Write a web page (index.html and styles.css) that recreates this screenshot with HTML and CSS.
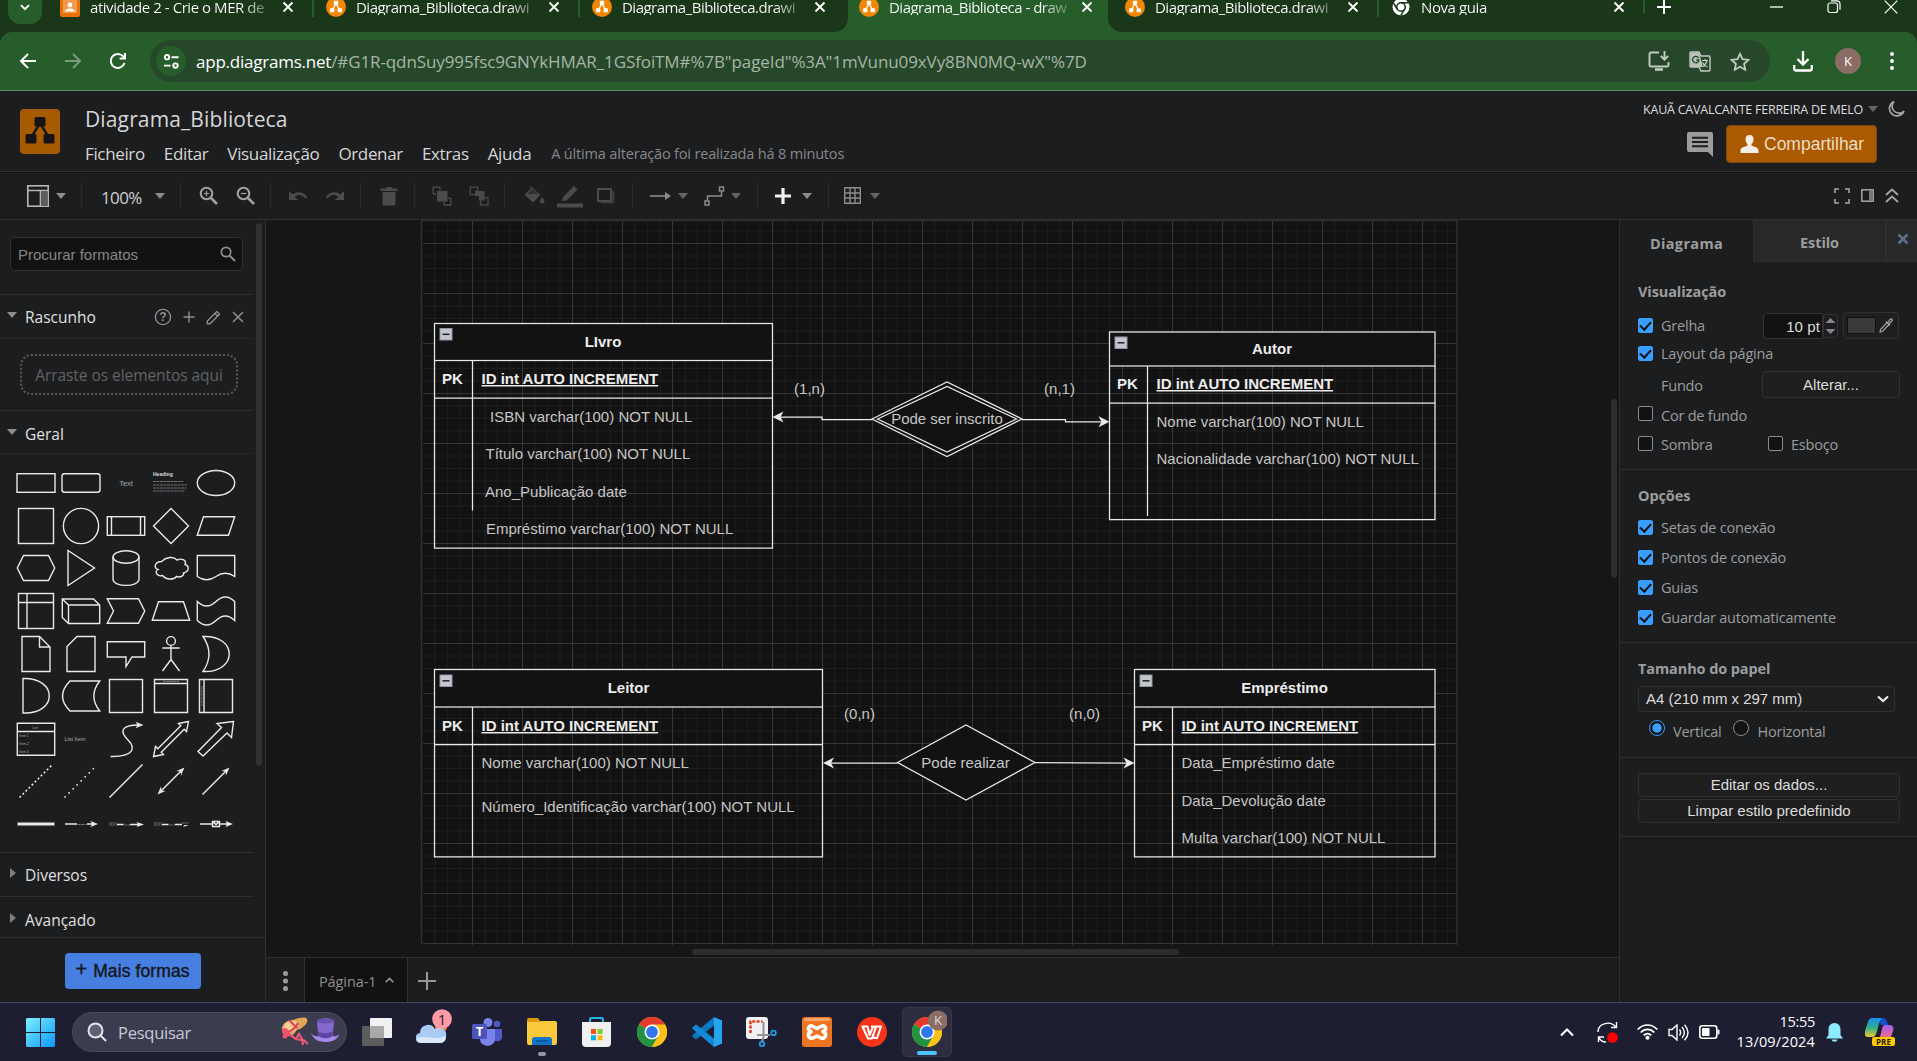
FILE: index.html
```html
<!DOCTYPE html>
<html lang="pt">
<head>
<meta charset="utf-8">
<title>Diagrama_Biblioteca - draw.io</title>
<link rel="stylesheet" href="styles.css">
</head>
<body>
<svg width="0" height="0" class="defs">
  <defs>
    <symbol id="fav" viewBox="0 0 20 20"><circle cx="10" cy="10" r="10" fill="#f08705"/><path d="M10 6.5 6.3 13M10 6.5l3.7 6.5" stroke="#fff" stroke-width="1.4"/><rect x="7.8" y="3.8" width="4.4" height="4" rx=".8" fill="#fff"/><rect x="4" y="11.2" width="4.4" height="4" rx=".8" fill="#fff"/><rect x="11.6" y="11.2" width="4.4" height="4" rx=".8" fill="#fff"/></symbol>
    <symbol id="x" viewBox="0 0 12 12"><path d="M1.5 1.5l9 9m0-9l-9 9" stroke="currentColor" stroke-width="1.8" fill="none"/></symbol>
    <symbol id="caret" viewBox="0 0 10 6"><path d="M0 0h10L5 6z" fill="currentColor"/></symbol>
    <symbol id="chrome" viewBox="0 0 30 30"><circle cx="15" cy="15" r="15" fill="#fbc116"/><path d="M15 15 2 7.5A15 15 0 0 1 28 7.5z" fill="#e33b2e"/><path d="M2 7.5A15 15 0 0 0 15 30l6.5-11.3L15 15z" fill="#229342"/><path d="M28 7.5H15v7.5l6.5 3.7L15 30A15 15 0 0 0 28 7.5z" fill="#fbc116"/><circle cx="15" cy="15" r="7.5" fill="#fff"/><circle cx="15" cy="15" r="5.9" fill="#3076ec"/></symbol>
  </defs>
</svg>

<div class="strip">
  <div class="strip-left">
    <div class="tab-search"><svg width="10" height="7" viewBox="0 0 10 7"><path d="M1 1.2l4 4 4-4" fill="none" stroke="#fff" stroke-width="1.9"/></svg></div>
    <div class="tab"><svg class="ficon" viewBox="0 0 20 20"><rect width="20" height="20" rx="2" fill="#e8710a"/><rect x="3" y="2" width="14" height="14" fill="#f29a4d"/><circle cx="10" cy="8" r="2.4" fill="#fff"/><path d="M5 14.5c0-4 10-4 10 0z" fill="#fff"/></svg><span class="tt t-a">atividade 2 - Crie o MER de</span><svg class="tx"><use href="#x"/></svg></div>
    <div class="tab sep"><svg class="ficon"><use href="#fav"/></svg><span class="tt">Diagrama_Biblioteca.drawi</span><svg class="tx"><use href="#x"/></svg></div>
    <div class="tab sep"><svg class="ficon"><use href="#fav"/></svg><span class="tt">Diagrama_Biblioteca.drawi</span><svg class="tx"><use href="#x"/></svg></div>
  </div>
  <div class="strip-active">
    <div class="tab"><svg class="ficon"><use href="#fav"/></svg><span class="tt">Diagrama_Biblioteca - draw</span><svg class="tx"><use href="#x"/></svg></div>
  </div>
  <div class="strip-right">
    <div class="tab"><svg class="ficon"><use href="#fav"/></svg><span class="tt">Diagrama_Biblioteca.drawi</span><svg class="tx"><use href="#x"/></svg></div>
    <div class="tab sep"><svg class="ficon" viewBox="0 0 20 20"><circle cx="10" cy="10" r="8.5" fill="#fff"/><circle cx="10" cy="10" r="4.3" fill="#fff" stroke="#1a371a" stroke-width="1.6"/><path d="M10 5.7h8M6.2 12 2.3 5.6M13.6 12.2 9.8 18.6" stroke="#1a371a" stroke-width="1.5"/></svg><span class="tt plain">Nova guia</span><svg class="tx"><use href="#x"/></svg></div>
    <div class="tab-new"><svg width="14" height="14" viewBox="0 0 14 14"><path d="M7 0v14M0 7h14" stroke="#fff" stroke-width="2"/></svg></div>
    <div class="win">
      <svg width="14" height="14" viewBox="0 0 14 14"><path d="M0 7h13" stroke="#fff" stroke-width="1.3"/></svg>
      <svg width="14" height="14" viewBox="0 0 14 14" fill="none" stroke="#fff" stroke-width="1.2"><rect x="1" y="3" width="9.5" height="9.5" rx="2"/><path d="M4 .8h6a3 3 0 0 1 3 3v6"/></svg>
      <svg width="14" height="14" viewBox="0 0 14 14"><path d="M.7.7l12.6 12.6m0-12.6L.7 13.3" stroke="#fff" stroke-width="1.2"/></svg>
    </div>
  </div>
</div>

<div class="navwrap"><div class="nav">
  <div class="nav-btns">
    <svg width="18" height="18" viewBox="0 0 18 18" fill="none" stroke="#fff" stroke-width="2"><path d="M17 9H2.5M9 2 2 9l7 7"/></svg>
    <svg width="18" height="18" viewBox="0 0 18 18" fill="none" stroke="#7c9b7e" stroke-width="2"><path d="M1 9h14.5M9 2l7 7-7 7"/></svg>
    <svg width="18" height="18" viewBox="0 0 18 18" fill="none" stroke="#fff" stroke-width="2"><path d="M15.5 11A7 7 0 1 1 14 4.2l1.6 1.7M16 1v5.4h-5.4"/></svg>
  </div>
  <div class="omni">
    <div class="site"><svg width="17" height="15" viewBox="0 0 17 15" fill="none" stroke="#fff" stroke-width="1.9"><circle cx="4" cy="3.2" r="2.2"/><path d="M8.5 3.2h7M1 11.6h6.5"/><circle cx="12.5" cy="11.6" r="2.2"/></svg></div>
    <div class="url"><b>app.diagrams.net</b><span>/#G1R-qdnSuy995fsc9GNYkHMAR_1GSfoiTM#%7B"pageId"%3A"1mVunu09xVy8BN0MQ-wX"%7D</span></div>
    <div class="omni-icons">
      <svg width="22" height="20" viewBox="0 0 22 20" fill="none" stroke="#c3ccc3" stroke-width="1.9"><path d="M11 1.5H3a1.5 1.5 0 0 0-1.5 1.5v11A1.5 1.5 0 0 0 3 15.500h16a1.500 1.500 0 0 0 1.500-1.500v-3"/><path d="M7 18.500h8" stroke-width="2.500"/><path d="M16.500 0v8M12.800 5l3.700 3.700L20.200 5"/></svg>
      <svg width="22" height="21" viewBox="0 0 22 21"><path d="M2 1h8l2 4h8a1 1 0 0 1 1 1v13a1 1 0 0 1-1 1h-8l-2-4H2a1 1 0 0 1-1-1V2a1 1 0 0 1 1-1z" fill="none" stroke="#c3ccc3" stroke-width="1.400"/><path d="M1.500 1.500h8.500L14 16H1.500z" fill="#b9c3b9"/><path d="M9.600 7A3.200 3.200 0 1 0 10 9H7.200" fill="none" stroke="#27472b" stroke-width="1.300"/><path d="M13 9.500h6M16 8v1.500M18 9.500c-1 4-3 5-4 6M13.500 11.500c1.500 3 3.500 4 5 4.500" fill="none" stroke="#c3ccc3" stroke-width="1.200"/></svg>
      <svg width="20" height="19" viewBox="0 0 20 19"><path d="M10 1.800l2.500 5.400 5.900.7-4.300 4 1.100 5.800L10 14.800l-5.200 2.900 1.100-5.800-4.300-4 5.900-.7z" fill="none" stroke="#c3ccc3" stroke-width="1.800"/></svg>
    </div>
  </div>
  <div class="nav-right">
    <svg width="20" height="21" viewBox="0 0 20 21" fill="none" stroke="#fff" stroke-width="2.300"><path d="M10 0v13M4.500 8l5.500 5.500L15.500 8M1.200 14v3.500a2 2 0 0 0 2 2h13.600a2 2 0 0 0 2-2V14"/></svg>
    <span class="avatar">K</span>
    <svg width="4" height="18" viewBox="0 0 4 18" fill="#fff"><circle cx="2" cy="2" r="1.900"/><circle cx="2" cy="9" r="1.900"/><circle cx="2" cy="16" r="1.900"/></svg>
  </div>
</div></div>

<header class="head">
  <svg class="logo" width="40" height="45" viewBox="0 0 40 45"><rect width="40" height="45" rx="4" fill="#a85a00"/><path d="M20 14 11 29M20 14l9 15" stroke="#1b1b1b" stroke-width="2.600"/><g fill="#141414"><rect x="14.500" y="8" width="11" height="9.500" rx="1.500"/><rect x="5.500" y="25" width="11" height="9.500" rx="1.500"/><rect x="23.500" y="25" width="11" height="9.500" rx="1.500"/></g></svg>
  <div class="head-mid">
    <div class="title">Diagrama_Biblioteca</div>
    <nav class="menu"><span>Ficheiro</span><span>Editar</span><span>Visualização</span><span>Ordenar</span><span>Extras</span><span>Ajuda</span><em>A última alteração foi realizada há 8 minutos</em></nav>
  </div>
  <div class="head-right">
    <div class="user"><span>KAUÃ CAVALCANTE FERREIRA DE MELO</span><svg class="caret dk"><use href="#caret"/></svg><svg width="17" height="18" viewBox="0 0 17 18"><path d="M6 1.500A7.500 7.500 0 1 0 16 11 6.500 6.500 0 0 1 6 1.500z" fill="none" stroke="#a5a6a7" stroke-width="1.700"/></svg></div>
    <div class="actions">
      <svg width="26" height="25" viewBox="0 0 26 25"><path d="M2 0h22a2 2 0 0 1 2 2v23l-5-5H2a2 2 0 0 1-2-2V2a2 2 0 0 1 2-2z" fill="#9b9c9d"/><path d="M5 5.800h16M5 10h16M5 14.200h16" stroke="#1c1d1f" stroke-width="2"/></svg>
      <div class="share"><svg width="19" height="19" viewBox="0 0 19 19"><path d="M9.500 0c3 0 4 2 4 4.500 0 2-1 3.700-2 4.700v1.600c3 1 7 1.700 7 4.700V18H.500v-2.500c0-3 4-3.700 7-4.700V9.200c-1-1-2-2.700-2-4.700 0-2.500 1-4.500 4-4.500z" fill="#f3eee8"/></svg><span>Compartilhar</span></div>
    </div>
  </div>
</header>

<div class="bar">
  <div class="g g1"><svg width="22" height="22" viewBox="0 0 22 22" fill="none" stroke="#b5b6b7" stroke-width="1.600"><rect x=".800" y=".800" width="20.400" height="20.400"/><path d="M1 5.500h20M13.500 5.500V21"/><rect x="14.500" y="6" width="6" height="15" fill="#5c5d5e" stroke="none"/></svg><svg class="caret"><use href="#caret"/></svg></div>
  <div class="g g2"><span>100%</span><svg class="caret"><use href="#caret"/></svg></div>
  <div class="g"><svg width="24" height="24" viewBox="0 0 24 24" fill="none" stroke="#a0a1a2"><circle cx="10.500" cy="9.500" r="5.800" stroke-width="2.100"/><path d="M15 14l6 6" stroke-width="2.600"/><path d="M10.500 6.800v5.400M7.800 9.500h5.400" stroke-width="1.200"/></svg><svg width="24" height="24" viewBox="0 0 24 24" fill="none" stroke="#a0a1a2"><circle cx="10.500" cy="9.500" r="5.800" stroke-width="2.100"/><path d="M15 14l6 6" stroke-width="2.600"/><path d="M7.800 9.500h5.400" stroke-width="1.200"/></svg></div>
  <div class="g dim"><svg width="24" height="24" viewBox="0 0 24 24"><path d="M3 7v9h9l-3.300-3.300c3.500-3 8-2 10.800 1.800l2-1C18 8 11.500 6.500 6.600 10.600z"/></svg><svg width="24" height="24" viewBox="0 0 24 24"><path d="M21 7v9h-9l3.300-3.300c-3.500-3-8-2-10.800 1.800l-2-1C6 8 12.500 6.500 17.400 10.600z"/></svg></div>
  <div class="g dim"><svg width="24" height="24" viewBox="0 0 24 24"><path d="M3.500 4.500h5l1-1.500h5l1 1.500h5V7h-17zM5.500 8h13v11.500a2 2 0 0 1-2 2h-9a2 2 0 0 1-2-2z"/></svg></div>
  <div class="g dim"><svg width="24" height="24" viewBox="0 0 24 24"><rect x="7" y="7" width="10.500" height="10.500"/><path d="M10 3.200H3.200V10M10 3.200V6M3.200 10H6M14 21h6.800v-6.800M14 21v-3M20.800 14.200H18" fill="none" stroke="#4a4b4c" stroke-width="1.300"/></svg><svg width="24" height="24" viewBox="0 0 24 24"><path d="M8 7h9.500v9.500H12V12H8z"/><g fill="none" stroke="#4a4b4c" stroke-width="1.300"><rect x="3.200" y="3.200" width="7.500" height="7.500"/><rect x="13.500" y="13.500" width="7.500" height="7.500"/></g></svg></div>
  <div class="g dim"><svg width="24" height="24" viewBox="0 0 24 24"><path d="M8 1.500 18.500 11 11 18.500 2.500 10.500 9 4.500zM20 13c1.500 2 2.500 3.300 2.500 4.300a2.300 2.300 0 0 1-4.600 0C17.900 16.300 18.900 15 20 13z"/><path d="M5 10l5.500-5 5.500 5z" fill="#1c1d1f" opacity=".6"/></svg><svg width="28" height="26" viewBox="0 0 28 26" class="pen"><path d="M7 14 18 3l3.500 3.500L10.500 17.500 6 18z"/><rect x="1" y="20.500" width="26" height="4"/></svg><svg width="24" height="24" viewBox="0 0 24 24"><path d="M7 19.500h13.500V7H18v10H7z" opacity=".6"/><rect x="4" y="5" width="13" height="12" fill="none" stroke="#4a4b4c" stroke-width="2"/></svg></div>
  <div class="g g8"><svg width="22" height="10" viewBox="0 0 22 10"><path d="M0 5h17" stroke="#8b8c8d" stroke-width="1.600"/><path d="M15 1l6 4-6 4z" fill="#8b8c8d"/></svg><svg class="caret dk"><use href="#caret"/></svg><svg class="way" width="21" height="20" viewBox="0 0 21 20" fill="none" stroke="#8b8c8d" stroke-width="1.500"><path d="M3.500 14.500V10h14V5.500"/><rect x="1" y="15" width="4" height="4"/><rect x="15.500" y="1" width="4" height="4"/></svg><svg class="caret dk"><use href="#caret"/></svg></div>
  <div class="g g9"><svg width="18" height="18" viewBox="0 0 18 18"><path d="M9 1v16M1 9h16" stroke="#f0f0f0" stroke-width="3.200"/></svg><svg class="caret"><use href="#caret"/></svg></div>
  <div class="g g10"><svg width="17" height="17" viewBox="0 0 17 17"><path d="M.700.700h15.600v15.600H.700zM6 0v17M11 0v17M0 6h17M0 11h17" fill="none" stroke="#8b8c8d" stroke-width="1.400"/></svg><svg class="caret dk"><use href="#caret"/></svg></div>
  <div class="bar-end">
    <svg width="16" height="16" viewBox="0 0 16 16" fill="none" stroke="#a4a5a6" stroke-width="1.600"><path d="M1 5V1h4M11 1h4v4M15 11v4h-4M5 15H1v-4"/></svg>
    <svg width="13" height="13" viewBox="0 0 13 13"><rect x=".800" y=".800" width="11.400" height="11.400" fill="none" stroke="#a4a5a6" stroke-width="1.500"/><rect x="8" y="1" width="4" height="11" fill="#77787a"/></svg>
    <svg width="14" height="15" viewBox="0 0 14 15" fill="none" stroke="#a4a5a6" stroke-width="1.800"><path d="M1 7l6-5.500L13 7M1 14l6-5.500L13 14"/></svg>
  </div>
</div>

<main class="main">
  <aside class="side">
    <div class="side-scroll">
      <div class="search-row"><div class="search"><span>Procurar formatos</span><svg width="16" height="16" viewBox="0 0 16 16" fill="none" stroke="#8d8e8f"><circle cx="6" cy="6" r="4.700" stroke-width="1.700"/><path d="M9.500 9.500l5.500 5.500" stroke-width="2"/></svg></div></div>
      <div class="sec h44"><svg class="caret"><use href="#caret"/></svg><span>Rascunho</span>
        <div class="sec-ic">
          <svg width="18" height="18" viewBox="0 0 18 18"><circle cx="9" cy="9" r="7.600" fill="none" stroke="#8d8e8f" stroke-width="1.400"/><text x="9" y="13.200" text-anchor="middle" class="q">?</text></svg>
          <svg width="12" height="12" viewBox="0 0 12 12"><path d="M6 .500v11M.500 6h11" stroke="#8d8e8f" stroke-width="1.400"/></svg>
          <svg width="15" height="15" viewBox="0 0 15 15" fill="none" stroke="#8d8e8f" stroke-width="1.400"><path d="M1.300 13.700V11l9.500-9.500 2.700 2.700L4 13.700zM9 3.500 11.500 6"/></svg>
          <svg width="12" height="12" viewBox="0 0 12 12"><path d="M1 1l10 10m0-10L1 11" stroke="#8d8e8f" stroke-width="1.500"/></svg>
        </div></div>
      <div class="drop-row"><div class="drop">Arraste os elementos aqui</div></div>
      <div class="sec h43"><svg class="caret"><use href="#caret"/></svg><span>Geral</span></div>
      <div class="palette">
        <svg viewBox="-22 -21 44 42"><rect x="-19" y="-9.300" width="38" height="18.600"/></svg>
        <svg viewBox="-22 -21 44 42"><rect x="-19" y="-9.300" width="38" height="18.600" rx="2.500"/></svg>
        <svg viewBox="-22 -21 44 42"><text x="0" y="3" text-anchor="middle" class="p-t">Text</text></svg>
        <svg viewBox="-22 -21 44 42"><text x="-18" y="-7" class="p-h">Heading</text><path class="dimline" d="M-18-1.500H12M-18 2H16M-18 5H15.500M-18 8H14"/></svg>
        <svg viewBox="-22 -21 44 42"><ellipse rx="18.700" ry="12.500"/></svg>
        <svg viewBox="-22 -21 44 42"><rect x="-17.500" y="-17.500" width="35" height="35"/></svg>
        <svg viewBox="-22 -21 44 42"><circle r="17.600"/></svg>
        <svg viewBox="-22 -21 44 42"><rect x="-18.700" y="-9.300" width="37.400" height="18.600"/><path d="M-14.500-9.300V9.300M14.500-9.300V9.300"/></svg>
        <svg viewBox="-22 -21 44 42"><path d="M0-17.500 17.500 0 0 17.500-17.500 0z"/></svg>
        <svg viewBox="-22 -21 44 42"><path d="M-18.700 9.300-12.500-9.300H18.700L12.500 9.300z"/></svg>
        <svg viewBox="-22 -21 44 42"><path d="M-18.700 0-12.500-12.500H12.500L18.700 0 12.500 12.500H-12.500z"/></svg>
        <svg viewBox="-22 -21 44 42"><path d="M-13-17.500V17.500L13.500 0z"/></svg>
        <svg viewBox="-22 -21 44 42"><path d="M-13-11V11C-13 19.500 13 19.500 13 11V-11"/><ellipse cy="-11" rx="13" ry="6.300"/></svg>
        <svg viewBox="-22 -21 44 42"><path d="M-9.500-6.500C-16-6.500-18 0-13 1.500-17.500 4-13 9-8.500 7.500-5 12 3 12 5.500 8.500 10 10 13.500 7 12.500 5 19 3.500 18-2.500 14-3.500 16-8 11-10 6-8 2.500-12-5-11-9.500-6.500z"/></svg>
        <svg viewBox="-22 -21 44 42"><path d="M-18.700-12.500H18.700V8.500Q9.300 2 0 8.500T-18.700 8.500z"/></svg>
        <svg viewBox="-22 -21 44 42"><rect x="-17.500" y="-17.500" width="35" height="35"/><path d="M-9-17.500V17.500M-17.500-8.500H17.500"/></svg>
        <svg viewBox="-22 -21 44 42"><path d="M-18.700-12H12.500L18.700-6V12.500H-12.500L-18.700 6.500zM-18.700-12-12.500-6H18.700M-12.500-6V12.500"/></svg>
        <svg viewBox="-22 -21 44 42"><path d="M-18.700-12.300H12.500L18.700 0 12.500 12.300H-18.700L-12.500 0z"/></svg>
        <svg viewBox="-22 -21 44 42"><path d="M-18.700 9.300-12.500-9.300H12.500L18.700 9.300z"/></svg>
        <svg viewBox="-22 -21 44 42"><path d="M-18.700-9.500Q-9.300-.500 0-9.500T18.700-9.500V9.500Q9.300 .500 0 9.500T-18.700 9.500z"/></svg>
        <svg viewBox="-22 -21 44 42"><path d="M-14-17.500H3.500L14-7V17.500H-14zM3.500-17.500V-7H14"/></svg>
        <svg viewBox="-22 -21 44 42"><path d="M-4-17.500H14V17.500H-14V-7.500z"/></svg>
        <svg viewBox="-22 -21 44 42"><path d="M-18.700-12.300H18.700V3H6L0 12.500V3H-18.700z"/></svg>
        <svg viewBox="-22 -21 44 42"><circle cy="-13" r="4.400"/><path d="M0-8.500V5.500M-8.700-6H8.700M0 5.500-8.500 17M0 5.500 8.500 17"/></svg>
        <svg viewBox="-22 -21 44 42"><path d="M-13-17.500C22-19 22 19-13 17.500Q-1 0-13-17.500z"/></svg>
        <svg viewBox="-22 -21 44 42"><path d="M-13-17.500C22-18.500 22 18.500-13 17z"/></svg>
        <svg viewBox="-22 -21 44 42"><path d="M-11-15H18.700Q7 0 18.700 15H-11Q-26 0-11-15z"/></svg>
        <svg viewBox="-22 -21 44 42"><rect x="-16.500" y="-16.500" width="33" height="33"/></svg>
        <svg viewBox="-22 -21 44 42"><path d="M-16.500-16.500h33v33h-33zM-16.500-12.500h33"/><path class="dimline" d="M-8-14.500H8"/></svg>
        <svg viewBox="-22 -21 44 42"><path d="M-16.500-16.500h33v33h-33zM-12-16.500v33"/><path class="dimline" d="M-14.200-10V10"/></svg>
        <svg viewBox="-22 -21 44 42"><path d="M-18.700-15.700h37.400v32h-37.400zM-18.700-7.500h37.400"/><text x="-1" y="-10.300" text-anchor="middle" class="p-x">List</text><text x="-17" y="-2.500" class="p-x">Item 1</text><text x="-17" y="5.500" class="p-x">Item 2</text><text x="-17" y="13.500" class="p-x">Item 3</text></svg>
        <svg viewBox="-22 -21 44 42"><text x="-16.500" y="2" class="p-l">List Item</text></svg>
        <svg viewBox="-22 -21 44 42"><path d="M-15.500 17.500C8 18 10 9 2 1S-6-14 13-14"/><path class="fl" d="M17.500-14l-8 3.300 2-3.300-2-3.300z"/></svg>
        <svg viewBox="-22 -21 44 42"><path d="M17.500-17.500 7.500-15.500 9.800-13.200-13.200 9.800-15.500 7.500-17.500 17.500-7.500 15.500-9.800 13.200 13.200-9.800 15.500-7.500z"/></svg>
        <svg viewBox="-22 -21 44 42"><path d="M17.500-17.500 1-15.500 5.500-11.500-18 12.500-13 17 11-6 15.500-1.500z"/></svg>
        <svg viewBox="-22 -21 44 42"><path class="da1" d="M-16.500 16.500 16.500-16.500"/></svg>
        <svg viewBox="-22 -21 44 42"><path class="da2" d="M-16.500 16.500 14.500-14.500"/></svg>
        <svg viewBox="-22 -21 44 42"><path d="M-16.500 16.500 16.500-16.500"/></svg>
        <svg viewBox="-22 -21 44 42"><path d="M-10 10 10-10"/><path class="fl" d="M13.500-13.500 5.500-10l4 .500.500 4zM-13.500 13.500-5.500 10l-4-.500-.500-4z"/></svg>
        <svg viewBox="-22 -21 44 42"><path d="M-13.500 13.500 10-10"/><path class="fl" d="M13.500-13.500 5.500-10l4 .500.500 4z"/></svg>
        <svg viewBox="-22 -21 44 42"><path d="M-18.500 0h37" class="thick"/></svg>
        <svg viewBox="-22 -21 44 42"><path d="M-16 0H-4M6 0h8"/><path class="dimline" d="M-3.500.500h9"/><path class="fl" d="M17 0 9.500 3l1.500-3-1.500-3z"/></svg>
        <svg viewBox="-22 -21 44 42"><path d="M-9 .500h6.500M4 .500h11"/><path class="dimline" d="M-17-1h8M-17 1h8M-2 1h6"/><path class="fl" d="M18 .500l-7.500 2.500L12 .500 10.500-2z"/></svg>
        <svg viewBox="-22 -21 44 42"><path d="M-9 .500h6.500M4 .500h7"/><path class="dimline" d="M-17-1h8M-17 1h8M-2 1h6M11-1h7"/><path class="fl" d="M18 1l-6 2 1.500-2z"/></svg>
        <svg viewBox="-22 -21 44 42"><path d="M-16 0H-4M4 0h9M-3.500-2.500h7v5h-7zM-3.500-2.500 0 .500l3.500-3"/><path class="fl" d="M17 0 9.500 3l1.500-3-1.500-3z"/></svg>
      </div>
      <div class="sec h44"><svg class="rc" viewBox="0 0 6 10"><path d="M0 0v10l6-5z" fill="#7d7e7f"/></svg><span>Diversos</span></div>
      <div class="sec h41"><svg class="rc" viewBox="0 0 6 10"><path d="M0 0v10l6-5z" fill="#7d7e7f"/></svg><span>Avançado</span></div>
      <i class="side-thumb"></i>
    </div>
    <div class="side-foot"><div class="more"><span class="pl">+</span> Mais formas</div></div>
  </aside>

  <section class="center">
    <div class="stage">
      <svg class="diagram" viewBox="266 220 1353 737" width="1353" height="737">
        <defs>
          <pattern id="grid" patternUnits="userSpaceOnUse" x="422" y="243" width="50" height="50">
            <path d="M13 0v50M25.500 0v50M38 0v50M0 13h50M0 25.500h50M0 38h50" stroke="#1d1d1d" stroke-width="1" fill="none"/>
            <path d="M.500 0v50M0 .500h50" stroke="#363636" stroke-width="1" fill="none"/>
          </pattern>
        </defs>
        <rect x="421" y="220" width="1036" height="725" fill="#121212"/>
        <rect x="423" y="221" width="1034" height="724" fill="url(#grid)"/>
        <path d="M421.500 945V220.500H1457V945" fill="none" stroke="#2f3031" stroke-width="1.500"/>
        <g class="tbl">
          <rect x="434.500" y="323.500" width="338" height="37" class="hd"/>
          <path d="M434.500 360.500V548H772.500V360.500M434.500 398H772.500M472.500 361V510.500"/>
          <rect x="1109.500" y="332" width="325.500" height="34" class="hd"/>
          <path d="M1109.500 366V519.500H1435V366M1109.500 403H1435M1147.500 366V516"/>
          <rect x="434.500" y="669.500" width="388" height="37.500" class="hd"/>
          <path d="M434.500 707V856.800H822.500V707M434.500 744.500H822.500M472.500 707V856.800"/>
          <rect x="1134.500" y="669.500" width="300.500" height="37.500" class="hd"/>
          <path d="M1134.500 707V856.800H1435V707M1134.500 744.500H1435M1172.500 707V856.800"/>
          <path d="M872 419 947 382l75 37-75 37.500z" class="bg"/><path d="M877.500 419 947 386.500l69.500 32.500-69.500 33z"/>
          <path d="M897.500 762.500 966 725l69 37.500-69 37.500z" class="bg"/>
          <path d="M780 417H822V419.500H872M1022 419.500H1065.500V421.800H1102M830 763H897.500M1035 762.500 1127 763"/>
          <path class="ar" d="M772.500 417l11-5.500-3 5.500 3 5.500zM1109.500 421.800l-11-5.500 3 5.500-3 5.500zM823 763l11-5.500-3 5.500 3 5.500zM1134.500 763l-11-5.500 3 5.500-3 5.500z"/>
        </g>
        <g class="col"><g transform="translate(440 328.500)"><rect width="12" height="11.500"/><path d="M2.500 5.800h7"/></g><g transform="translate(1115 337)"><rect width="12" height="11.500"/><path d="M2.500 5.800h7"/></g><g transform="translate(440 675)"><rect width="12" height="11.500"/><path d="M2.500 5.800h7"/></g><g transform="translate(1140 675)"><rect width="12" height="11.500"/><path d="M2.500 5.800h7"/></g></g>
        <g class="tx-b mid"><text x="603" y="347">LIvro</text><text x="1272" y="354">Autor</text><text x="628.500" y="693">Leitor</text><text x="1284.500" y="693">Empréstimo</text><text x="452.500" y="384">PK</text><text x="1127.500" y="389">PK</text><text x="452.500" y="731">PK</text><text x="1152.500" y="731">PK</text></g>
        <g class="tx-b un"><text x="481.500" y="384">ID int AUTO INCREMENT</text><text x="1156.500" y="389">ID int AUTO INCREMENT</text><text x="481.500" y="731">ID int AUTO INCREMENT</text><text x="1181.500" y="731">ID int AUTO INCREMENT</text></g>
        <g class="tx-n"><text x="490" y="422">ISBN varchar(100) NOT NULL</text><text x="485.500" y="459">Título varchar(100) NOT NULL</text><text x="485" y="497">Ano_Publicação date</text><text x="486" y="534">Empréstimo varchar(100) NOT NULL</text>
          <text x="1156.500" y="427">Nome varchar(100) NOT NULL</text><text x="1156.500" y="464">Nacionalidade varchar(100) NOT NULL</text>
          <text x="481.500" y="768">Nome varchar(100) NOT NULL</text><text x="481.500" y="812">Número_Identificação varchar(100) NOT NULL</text>
          <text x="1181.500" y="768">Data_Empréstimo date</text><text x="1181.500" y="806">Data_Devolução date</text><text x="1181.500" y="843">Multa varchar(100) NOT NULL</text></g>
        <g class="tx-n mid"><text x="947" y="424">Pode ser inscrito</text><text x="965.500" y="768">Pode realizar</text><text x="809.500" y="394">(1,n)</text><text x="1059.500" y="394">(n,1)</text><text x="859.500" y="719">(0,n)</text><text x="1084.500" y="719">(n,0)</text></g>
      </svg>
      <i class="vthumb"></i><i class="hthumb"></i>
    </div>
    <div class="pages">
      <div class="pdots"><svg width="5" height="20" viewBox="0 0 5 20" fill="#9a9b9c"><circle cx="2.500" cy="2.500" r="2.500"/><circle cx="2.500" cy="10" r="2.500"/><circle cx="2.500" cy="17.500" r="2.500"/></svg></div>
      <div class="ptab"><span>Página-1</span><svg width="9" height="6" viewBox="0 0 9 6"><path d="M.700 5.200l3.800-3.800 3.800 3.800" fill="none" stroke="#9a9b9c" stroke-width="1.500"/></svg></div>
      <svg class="padd" width="18" height="18" viewBox="0 0 18 18"><path d="M9 0v18M0 9h18" stroke="#97989a" stroke-width="2"/></svg>
    </div>
  </section>

  <aside class="fmt">
    <div class="ftabs"><div class="ft on">Diagrama</div><div class="ft">Estilo</div><div class="ft-x"><svg width="12" height="12" viewBox="0 0 12 12"><path d="M1.500 1.500l9 9m0-9l-9 9" stroke="#5c6f86" stroke-width="2.600"/></svg></div></div>
    <div class="fsec s1">
      <div class="r r30"><b>Visualização</b></div>
      <div class="r grelha"><i class="cb on"></i><span>Grelha</span><div class="num">10 pt</div><div class="step"><svg width="11" height="5" viewBox="0 0 10 5"><path d="M0 5h10L5 0z" fill="#85868a"/></svg><svg width="11" height="5" viewBox="0 0 10 5"><path d="M0 0h10L5 5z" fill="#85868a"/></svg></div><div class="color"><i></i><svg width="14" height="15" viewBox="0 0 14 15" fill="none" stroke="#a5a6a7" stroke-width="1.200"><path d="M1 14l.500-2.500 6.500-7 2 2-6.500 7zM7 3.500l4 4M8.500 5l2.500-3.500c1.500-1.500 3 0 1.800 1.500L10 6"/></svg></div></div>
      <div class="r lay"><i class="cb on"></i><span>Layout da página</span></div>
      <div class="r fundo"><span>Fundo</span><div class="btn">Alterar...</div></div>
      <div class="r r30 hi"><i class="cb"></i><span>Cor de fundo</span></div>
      <div class="r r29 hi"><i class="cb"></i><span class="w">Sombra</span><i class="cb"></i><span>Esboço</span></div>
    </div>
    <div class="fsec s2">
      <div class="r r32"><b>Opções</b></div>
      <div class="r r30"><i class="cb on"></i><span>Setas de conexão</span></div>
      <div class="r r30"><i class="cb on"></i><span>Pontos de conexão</span></div>
      <div class="r r30"><i class="cb on"></i><span>Guias</span></div>
      <div class="r r30"><i class="cb on"></i><span>Guardar automaticamente</span></div>
    </div>
    <div class="fsec s3">
      <div class="r r30"><b>Tamanho do papel</b></div>
      <div class="select"><span>A4 (210 mm x 297 mm)</span><svg width="12" height="8" viewBox="0 0 12 8"><path d="M1 1.500l5 4.500 5-4.500" fill="none" stroke="#e8e8e8" stroke-width="2.200"/></svg></div>
      <div class="r radios"><i class="rd on"></i><span>Vertical</span><i class="rd"></i><span>Horizontal</span></div>
    </div>
    <div class="fsec s4"><div class="btn wide">Editar os dados...</div><div class="btn wide">Limpar estilo predefinido</div></div>
  </aside>
</main>

<footer class="task">
  <svg class="start" width="29" height="29" viewBox="0 0 29 29"><defs><linearGradient id="w" x1="0" y1="0" x2="1" y2="1"><stop offset="0" stop-color="#7cf0fb"/><stop offset="1" stop-color="#0a96f8"/></linearGradient></defs><path d="M1 0h13v14H0V1zM15 0h13l1 1v13H15zM0 15h14v14H1l-1-1zM15 15h14v13l-1 1H15z" fill="url(#w)"/></svg>
  <div class="tsearch"><svg width="20" height="20" viewBox="0 0 20 20" fill="none" stroke="#e4e4ea" stroke-width="2"><circle cx="8.500" cy="8.500" r="7" fill="#606072"/><path d="M13.500 13.500l5.500 5.500"/></svg><span>Pesquisar</span>
    <svg width="58" height="30" viewBox="0 0 58 30"><path d="M1 14C0 7 6 3 12 3c5-2 12-4 14-1 2 4-5 10-10 11l-3 4c-4 3-11 2-12-3z" fill="#e3a659"/><path d="M2 12C3 5 9 2 14 4c3 1 3 5 1 8-4 5-11 5-13 0z" fill="#f6cf92"/><path d="M8 3l8 8M4 15c5 0 10-3 13-9" stroke="#df4257" stroke-width="2" fill="none"/><g fill="#f0526c"><circle cx="4" cy="14" r="3"/><circle cx="7" cy="17" r="2.500"/><circle cx="4" cy="19" r="2.500"/></g><path d="M8 17l7 5 3-5 3 5 6 5M15 22l10 2M21 22l1 6" stroke="#ec5870" stroke-width="2.200" fill="none"/><path d="M36 5c0-5 17-5 17 0l-1.500 16h-14z" fill="#8468cf"/><ellipse cx="44.500" cy="4" rx="8.500" ry="2.500" fill="#6b51b1"/><path d="M30 15c1 4 5 5 8 4 4 3 9 3 13 0 3 1 7 0 8-4-1 6-6 10-14.500 10S31 21 30 15z" fill="#a48aec"/><path d="M37 14c4 3 10 3 15 0l-.500 5c-4 3-10 3-14 0z" fill="#5f45a3"/></svg></div>
  <div class="apps">
    <div><svg width="30" height="28" viewBox="0 0 30 28"><rect x="8" y="0" width="22" height="20" rx="1" fill="#f1f1f1"/><rect x="0" y="8" width="22" height="20" rx="1" fill="#5c5c5c"/><path d="M8 8h14v12H8z" fill="#a9a9a9"/></svg></div>
    <div><svg width="36" height="38" viewBox="0 0 36 38" class="up"><circle cx="25" cy="18" r="6" fill="#f07a24"/><path d="M5 34a5 5 0 0 1-1-10 8 8 0 0 1 15-4 7 7 0 0 1 11 7c0 4-2 7-6 7z" fill="#a9cbf5"/><path d="M1 29c6-3 18 3 29-2 0 4-2 7-6 7H5c-2 0-4-2-4-5z" fill="#dbe9fb"/><circle cx="26" cy="10" r="9.800" fill="#ff9ba6"/><text x="26" y="15.500" text-anchor="middle" class="badge">1</text></svg></div>
    <div><svg width="30" height="28" viewBox="0 0 30 28"><circle cx="16" cy="4.500" r="4.500" fill="#7b83eb"/><circle cx="25" cy="6" r="3.200" fill="#5059c9"/><path d="M18 11h12v8c0 5-8 6-9 1z" fill="#5059c9"/><path d="M8 11h15v10c0 9-15 9-15 0z" fill="#7b83eb"/><rect x="0" y="6" width="15" height="15" rx="1.500" fill="#4b53bc"/><text x="7.500" y="18" text-anchor="middle" class="teams">T</text></svg></div>
    <div class="open"><svg width="30" height="28" viewBox="0 0 30 28"><path d="M0 2a2 2 0 0 1 2-2h9l3 4H0z" fill="#d99b0b"/><path d="M0 4h12l3-1h13a2 2 0 0 1 2 2v20a2 2 0 0 1-2 2H2a2 2 0 0 1-2-2z" fill="#fbc93b"/><path d="M5 27v-5a3 3 0 0 1 3-3h14a3 3 0 0 1 3 3v5z" fill="#1075c9"/><path d="M9 23h12" stroke="#0a4f94" stroke-width="1.500"/></svg></div>
    <div><svg width="29" height="30" viewBox="0 0 29 30"><path d="M8 5V2.500A1.500 1.500 0 0 1 9.500 1h10A1.500 1.500 0 0 1 21 2.500V5" fill="none" stroke="#27b5e8" stroke-width="2"/><path d="M0 5h29v21a4 4 0 0 1-4 4H4a4 4 0 0 1-4-4z" fill="#f0f0f0"/><path d="M9 12h5v5H9z" fill="#f1511b"/><path d="M15.500 12h5v5h-5z" fill="#80cc28"/><path d="M9 18.300h5v5H9z" fill="#00adef"/><path d="M15.500 18.300h5v5h-5z" fill="#fbbc09"/></svg></div>
    <div><svg width="30" height="30"><use href="#chrome"/></svg></div>
    <div><svg width="30" height="30" viewBox="0 0 30 30"><path d="M22 8.500 4 22.500 1 20 0 18.500 22 0z" fill="#0b79c4"/><path d="M22 21.500 4 7.500 1 10l-1 1.500L22 30z" fill="#1389d6"/><path d="M22 0l8 3.500v23L22 30z" fill="#25a5f0"/></svg></div>
    <div><svg width="31" height="30" viewBox="0 0 31 30"><rect width="22" height="22" rx="3" fill="#f1f1f3"/><path d="M4.500 16V4.500h12" fill="none" stroke="#d5421c" stroke-width="2.600" stroke-dasharray="3 1.400"/><path d="M17.500 5v15L16 25M11 18h13" fill="none" stroke="#929497" stroke-width="2"/><circle cx="16" cy="27" r="2.300" fill="none" stroke="#1b9de2" stroke-width="1.800"/><circle cx="27.500" cy="16" r="2.300" fill="none" stroke="#1b9de2" stroke-width="1.800"/></svg></div>
    <div><svg width="30" height="30" viewBox="0 0 30 30"><rect width="30" height="30" rx="3" fill="#ee7623"/><rect x="2" y="1" width="26" height="3" rx="1.500" fill="#f6a468"/><path d="M10 9c-4-1-5 4-1 5.500-4 1.500-3 8 2 6.500l4-2 4 2c5 1.500 6-5 2-6.500 4-1.500 3-6.500-1-5.500l-5 2.500z" fill="none" stroke="#fff" stroke-width="3.600" stroke-linejoin="round"/></svg></div>
    <div><svg width="30" height="30" viewBox="0 0 30 30"><circle cx="15" cy="15" r="15" fill="#f8331a"/><path d="M5.500 9.500h5l2 8.500 3.500-8h3L15 21.500h-4zM14 9.500h10L20 21h-3l-1.500-4" fill="none" stroke="#fff" stroke-width="2.100" stroke-linejoin="round"/></svg></div>
    <div class="active"><svg width="36" height="38" viewBox="0 0 36 38" class="ch"><use href="#chrome" x="1" y="7" width="30" height="30"/><circle cx="27" cy="10.500" r="10" fill="#8a6d64"/><text x="27" y="15" text-anchor="middle" class="kk">K</text></svg></div>
  </div>
  <div class="tray">
    <svg width="14" height="9" viewBox="0 0 14 9"><path d="M1 7.500 7 1.500l6 6" fill="none" stroke="#fff" stroke-width="2"/></svg>
    <svg width="21" height="21" viewBox="0 0 21 21" fill="none" stroke="#fff" stroke-width="1.400"><path d="M1 10C1 1 14-2 19 5.500M19.500 0v5.500H14M1.500 20v-5H7M2 15.500C3 18 6 20 9 20"/><circle cx="15.500" cy="15.500" r="5.300" fill="#f00" stroke="none"/></svg>
    <svg width="21" height="16" viewBox="0 0 21 16" fill="none" stroke="#fff" stroke-width="1.700"><path d="M.700 5.500c5.500-6 14-6 19.600 0M3.700 8.500c4-4.300 9.600-4.300 13.600 0M6.700 11.400c2.300-2.400 5.300-2.400 7.600 0"/><circle cx="10.500" cy="13.800" r="1.200" fill="#fff"/></svg>
    <svg width="21" height="17" viewBox="0 0 21 17" fill="none" stroke="#fff" stroke-width="1.400"><path d="M1 5.500h3L9 1v15L4 11.500H1zM11.500 5.500c1.500 2 1.500 4 0 6M14 3c3 3.500 3 7.500 0 11M16.500.700c4.500 5 4.500 10.600 0 15.600"/></svg>
    <svg width="21" height="14" viewBox="0 0 21 14"><rect x=".800" y=".800" width="17" height="12.400" rx="2.500" fill="none" stroke="#fff" stroke-width="1.600"/><rect x="3" y="3" width="7.500" height="8" rx="1" fill="#fff"/><rect x="18.500" y="4.500" width="2" height="5" rx="1" fill="#fff"/></svg>
    <div class="clock"><span>15:55</span><span>13/09/2024</span></div>
    <svg width="17" height="19" viewBox="0 0 17 19" fill="#8eebff"><path d="M8.500 0c4 0 6 3 6 6.500V12l2.500 3.500H0L2.500 12V6.500C2.500 3 4.500 0 8.500 0zM5.500 16.500h6c-.500 3-5.500 3-6 0z"/></svg>
    <svg width="30" height="28" viewBox="0 0 30 28"><defs><linearGradient id="c1" x1="0" y1="0" x2="0" y2="1"><stop offset="0" stop-color="#1b8ff0"/><stop offset=".500" stop-color="#2fae8e"/><stop offset="1" stop-color="#e8c92b"/></linearGradient><linearGradient id="c2" x1="0" y1="0" x2="0" y2="1"><stop offset="0" stop-color="#9f62ee"/><stop offset="1" stop-color="#ee6a8a"/></linearGradient></defs><path d="M14 0h4c3 0 4 3 5 7h-7z" fill="#1350cf"/><path d="M7 0h10c-3 2-4 12-6 16-1 3-3 3-5 3H3c-3 0-4-3-3-6L3 4c1-3 2-4 4-4z" fill="url(#c1)"/><path d="M20 7h5c3 0 4 3 3 6l-2 6H15l2-8c1-3 1-4 3-4z" fill="url(#c2)"/><rect x="7" y="19" width="23" height="9" rx="2" fill="#ffc800"/><text x="18.500" y="26.500" text-anchor="middle" class="pre">PRE</text></svg>
  </div>
</footer>
</body>
</html>
```
FILE: styles.css
```css
* { box-sizing: border-box; }
body { margin: 0; width: 1917px; height: 1061px; overflow: hidden; background: #1c1d1f; color: #dcdcdc; font-family: "Open Sans", "Noto Sans", sans-serif; font-size: 15px; display: flex; flex-direction: column; }
svg { display: block; flex: none; }
.defs { position: absolute; }
i { font-style: normal; }
.caret { width: 10px; height: 6px; color: #8b8c8d; }
.caret.dk { color: #636465; }

/* browser tabs */
.strip { height: 32px; display: flex; background: #275d2b; color: #fff; flex: none; }
.strip-left, .strip-right { background: #1a371a; display: flex; align-items: flex-start; }
.strip-left { width: 848px; border-bottom-right-radius: 14px; }
.strip-active { width: 260px; }
.strip-active .tab { margin-left: -3px; }
.strip-right { flex: 1; border-bottom-left-radius: 14px; padding-left: 3px; }
.tab-search { width: 34px; height: 24px; margin: 0 4px 0 8px; background: #275d2b; border-radius: 0 0 12px 12px; display: flex; justify-content: center; padding-top: 4px; }
.tab { width: 266px; height: 14px; display: flex; align-items: center; padding-left: 13px; border-left: 1px solid transparent; }
.tab.sep { height: 17px; padding-bottom: 3px; border-left: 2px solid #275d2b; padding-left: 12px; }
.ficon { width: 20px; height: 20px; margin-right: 10px; }
.tt { width: 179px; margin-right: 13px; white-space: nowrap; letter-spacing: -.52px; line-height: 16px; font-size: 15px; color: transparent; background: linear-gradient(90deg, #fff 85%, rgba(255, 255, 255, .25)); -webkit-background-clip: text; background-clip: text; }
.tt.t-a { letter-spacing: -.45px; }
.tt.plain { letter-spacing: -.4px; }
.tx { width: 12px; height: 12px; }
.tab-new { width: 40px; height: 14px; border-left: 2px solid #275d2b; display: flex; align-items: center; justify-content: center; }
.win { margin-left: auto; display: flex; gap: 43px; align-items: center; height: 14px; padding-right: 19px; }

/* address bar */
.navwrap { height: 59px; background: #1a371a; border-bottom: 1px solid #5d8a60; flex: none; }
.nav { height: 58px; background: #275d2b; border-radius: 12px 12px 0 0; display: flex; align-items: center; }
.nav-btns { width: 150px; display: flex; gap: 27px; padding-left: 19px; }
.omni { width: 1620px; height: 42px; border-radius: 21px; background: #27472b; display: flex; align-items: center; padding-left: 6px; }
.site { width: 30px; height: 30px; border-radius: 50%; background: #275d2b; display: flex; align-items: center; justify-content: center; margin-right: 10px; }
.url { flex: 1; font-size: 17px; letter-spacing: -.1px; color: #a5b6a6; white-space: nowrap; }
.url b { font-weight: 400; color: #fff; letter-spacing: -.23px; }
.omni-icons { display: flex; gap: 19px; align-items: center; padding-right: 20px; }
.nav-right { display: flex; align-items: center; padding-left: 23px; }
.avatar { width: 26px; height: 26px; border-radius: 50%; background: #8a6d64; margin: 0 29px 0 22px; color: #fff; font-size: 13px; display: flex; align-items: center; justify-content: center; }

/* application header */
.head { height: 80px; display: flex; flex: none; background: #1c1d1f; }
.logo { margin: 18px 25px 0 20px; }
.title { font-size: 21px; line-height: 28px; margin-top: 14px; letter-spacing: .13px; color: #d6d6d6; }
.menu { display: flex; align-items: center; margin-top: 8px; line-height: 26px; font-size: 17px; letter-spacing: -.35px; color: #d6d6d6; }
.menu span { margin-right: 19px; }
.menu em { font-style: normal; font-size: 14.500px; letter-spacing: -.17px; color: #87888a; margin-left: 1px; }
.head-right { margin-left: auto; padding-right: 12px; }
.user { display: flex; align-items: center; justify-content: flex-end; height: 20px; margin-top: 8px; font-size: 12.500px; letter-spacing: -.24px; }
.user .caret { margin: 0 10px 0 5px; }
.actions { display: flex; justify-content: flex-end; align-items: center; gap: 13px; margin: 6px 28px 0 0; }
.share { width: 151px; height: 38px; background: #ab5a00; border: 1px solid #7e4a0c; border-radius: 4px; color: #ecdcc9; font: 17.500px "Liberation Sans", sans-serif; display: flex; align-items: center; gap: 5px; padding: 1px 0 0 13px; }

/* toolbar */
.bar { height: 49px; border-top: 1px solid #2e2f31; border-bottom: 1px solid #2e2f31; box-shadow: inset 0 1px #131415; display: flex; align-items: center; background: #1c1d1f; flex: none; }
.g { height: 25px; display: flex; align-items: center; justify-content: center; gap: 13px; border-right: 1px solid #2b2c2e; width: 90px; padding-left: 2px; }
.g.dim { fill: #4a4b4c; }
.g1 { width: 82px; justify-content: flex-start; padding-left: 27px; gap: 7px; }
.g2 { width: 99px; gap: 12px; font-size: 17px; letter-spacing: -.6px; justify-content: flex-start; padding-left: 19px; color: #cfcfcf; }
.g2 span { padding-top: 4px; width: 42px; }
.g:nth-child(5) { width: 54px; }
.g:nth-child(7) { width: 128px; gap: 10px; }
.g8 { width: 125px; gap: 6px; padding-left: 0; }
.g8 .way { margin-left: 10px; }
.g9 { width: 71px; gap: 10px; padding-left: 0; }
.g10 { border: 0; width: 70px; justify-content: flex-start; gap: 9px; padding-left: 15px; }
.bar-end { margin-left: auto; display: flex; align-items: center; gap: 11px; padding-right: 18px; }

/* shapes sidebar */
.main { height: 782px; flex: none; display: flex; }
.side { width: 266px; border-right: 1px solid #2e2f31; display: flex; flex-direction: column; }
.side-scroll { height: 718px; flex: none; position: relative; border-bottom: 1px solid #2e2f31; }
.side-scroll > div { width: 253px; }
.side-thumb { position: absolute; left: 256px; top: 3px; width: 6px; height: 543px; border-radius: 3px; background: #303132; }
.search-row { height: 74px; padding: 17px 0 0 10px; }
.search { width: 233px; height: 34px; border: 1px solid #303132; border-radius: 5px; background: #121212; font: 15px "Liberation Sans", sans-serif; color: #858687; display: flex; align-items: center; justify-content: space-between; padding: 0 6px 0 7px; }
.sec { display: flex; align-items: center; border-top: 1px solid #2e2f31; font-size: 15.500px; color: #e0e0e0; padding: 1px 0 0 7px; }
.sec > .caret, .sec > .rc { margin: -4px 8px 0 0; }
.rc { width: 6px; height: 10px; margin: -4px 9px 0 3px !important; }
.h44 { height: 44px; } .h43 { height: 43px; padding-top: 3px; } .h41 { height: 45px; }
.sec-ic { display: flex; align-items: center; gap: 11px; margin-left: auto; padding-right: 9px; }
.q { font: bold 12px "Liberation Sans", sans-serif; fill: #8d8e8f; }
.drop-row { height: 72px; border-top: 1px solid #27282a; padding: 15px 0 0 20px; }
.drop { width: 218px; height: 41px; border: 2px dotted #57585a; border-radius: 11px; display: flex; align-items: center; justify-content: center; color: #626364; font-size: 15.500px; letter-spacing: -.06px; white-space: nowrap; }
.palette { height: 399px; border-top: 1px solid #27282a; display: grid; grid-template-columns: repeat(5, 45px); grid-auto-rows: 42.600px; padding: 8px 0 0 13px; justify-items: center; align-items: center; }
.palette svg { width: 44px; height: 42px; fill: none; stroke: #e9e9e9; stroke-width: 1.400; overflow: visible; }
.palette .fl { fill: #e9e9e9; stroke: none; }
.palette .thick { stroke-width: 3; }
.palette .dimline { stroke: #77787a; stroke-width: .900; stroke-dasharray: 3 .500; }
.palette .da1 { stroke-dasharray: 2 2.300; stroke-width: 1.600; }
.palette .da2 { stroke-dasharray: 1.500 4.200; stroke-width: 1.600; }
.palette text { stroke: none; fill: #aaa; font-family: "Liberation Sans", sans-serif; }
.p-t { font-size: 7.500px; } .palette .p-h { font-size: 5px; font-weight: bold; fill: #ddd; } .p-x { font-size: 3.500px; } .p-l { font-size: 5.500px; }
.side-foot { flex: 1; display: flex; align-items: flex-start; justify-content: center; padding-top: 15px; }
.more { width: 136px; height: 36px; background: #477fe0; border-radius: 4px; color: #14171c; font: 17.500px "Liberation Sans", sans-serif; letter-spacing: .1px; -webkit-text-stroke: .400px #14171c; display: flex; align-items: center; justify-content: center; gap: 6px; }
.pl { font-size: 20px; margin-top: -3px; }

/* canvas */
.center { width: 1353px; display: flex; flex-direction: column; }
.stage { height: 737px; background: #161616; position: relative; }
.vthumb, .hthumb { position: absolute; background: #2d2d2d; border-radius: 3px; }
.vthumb { left: 1345px; top: 179px; width: 6px; height: 179px; }
.hthumb { left: 426px; top: 729px; width: 487px; height: 6px; }
.tbl { fill: none; stroke: #e9e9e9; stroke-width: 1.250; }
.tbl .hd, .tbl .bg { fill: #121212; }
.tbl .ar { fill: #e9e9e9; stroke: none; }
.col rect { fill: #c4c6cb; stroke: #8d97ab; }
.col path { stroke: #222; stroke-width: 1.500; }
.tx-b, .tx-n { font: 15px "Liberation Sans", Arial, sans-serif; fill: #c6c6c6; }
.tx-b { font-weight: bold; fill: #ececec; }
.un { text-decoration: underline; }
.mid { text-anchor: middle; }
.pages { height: 45px; border-top: 1px solid #2e2f31; display: flex; align-items: center; background: #1c1d1f; }
.pdots { width: 38px; display: flex; justify-content: center; padding-top: 1px; }
.ptab { width: 104px; height: 44px; background: #121212; border: 1px solid #2e2f31; border-width: 0 1px; display: flex; align-items: center; gap: 9px; padding: 3px 0 0 14px; color: #8f9091; font-size: 14.500px; letter-spacing: -.1px; white-space: nowrap; }
.ptab svg { margin-top: -3px; }
.padd { margin: 1px 0 0 10px; }

/* format panel */
.fmt { width: 298px; border-left: 1px solid #2e2f31; color: #9c9d9e; font-size: 14.500px; letter-spacing: -.22px; }
.fmt b, .ft { letter-spacing: -.1px; }
.ftabs { height: 42px; display: flex; }
.ft { width: 133px; font-weight: 700; display: flex; align-items: center; justify-content: center; background: #282828; border: 1px solid #2e2f31; border-width: 0 1px 1px; padding-top: 3px; }
.ft.on { background: none; border: 0; padding-top: 5px; letter-spacing: .35px; }
.ft-x { flex: 1; background: #282828; border-bottom: 1px solid #2e2f31; border-left: 1px solid #2e2f31; display: flex; justify-content: center; padding: 13px 0 0 2px; }
.fsec { border-bottom: 1px solid #2e2f31; padding-left: 18px; }
.s1 { height: 208px; padding-top: 14px; } .s2 { height: 173px; padding-top: 9px; } .s3 { height: 115px; padding-top: 10px; } .s4 { height: 79px; padding-top: 15px; }
.r { display: flex; align-items: center; }
.r30 { height: 30px; } .r29 { height: 29px; } .r32 { height: 32px; margin-bottom: 1px; }
.hi .cb { margin-top: -3px; }
.grelha { height: 39px; padding-bottom: 0; } .lay { height: 18px; margin-bottom: 8px; padding-bottom: 1px; } .fundo { height: 28px; margin-bottom: 1px; padding-left: 23px; }
.grelha .cb, .lay .cb { margin-top: -1px; }
.cb { width: 15px; height: 15px; border: 1px solid #8b8c8d; border-radius: 2px; background: #121212; margin-right: 8px; display: flex; align-items: center; justify-content: center; }
.cb.on { background: #3a9eff; border-color: #3a9eff; }
.cb.on::after { content: ""; width: 9px; height: 5px; border: solid #111; border-width: 0 0 2px 2px; transform: translateY(-1px) rotate(-48deg); }
.r .w { width: 107px; }
.grelha span { width: 102px; }
.num { width: 60px; height: 26px; background: #121212; border: 1px solid #303132; border-radius: 4px 0 0 4px; color: #dcdcdc; font: 15px/25px "Liberation Sans", sans-serif; letter-spacing: .1px; text-align: right; padding-right: 2px; }
.step { width: 15px; height: 24px; border: 1px solid #303132; border-radius: 3px; display: flex; flex-direction: column; justify-content: space-around; align-items: center; margin-right: 5px; }
.color { width: 56px; height: 27px; border: 1px solid #303132; border-radius: 4px; display: flex; align-items: center; justify-content: space-between; padding: 0 5px 0 3px; background: #1f1f20; }
.color i { width: 29px; height: 17px; background: #3a3a3a; border: 1px solid #111; }
.btn { width: 138px; height: 27px; border: 1px solid #303132; border-radius: 4px; background: #1f1f20; color: #dcdcdc; font: 15px "Liberation Sans", sans-serif; letter-spacing: 0; display: flex; align-items: center; justify-content: center; }
.fundo .btn { margin: -2px 17px 0 auto; }
.wide { width: 262px; height: 24px; margin-bottom: 2px; padding-bottom: 1px; }
.select { width: 257px; height: 26px; border: 1px solid #303132; border-radius: 4px; background: #1f1f20; color: #dcdcdc; font: 15px "Liberation Sans", sans-serif; letter-spacing: -.03px; display: flex; align-items: center; justify-content: space-between; padding: 0 5px 1px 7px; margin-top: 3px; }
.radios { height: 38px; padding-left: 11px; }
.radios span { margin-right: 12px; padding-top: 1px; }
.rd { width: 16px; height: 16px; border: 1px solid #8b8c8d; border-radius: 50%; background: #121212; margin: -6px 8px 0 0; }
.rd.on { border: 1.500px solid #3a9eff; background: radial-gradient(circle, #3a9eff 4.300px, #121212 5px); }

/* taskbar */
.task { height: 59px; border-top: 1px solid #44455a; background: #1e1e33; display: flex; align-items: center; flex: none; color: #fff; }
.start { margin: 0 17px 0 26px; }
.tsearch { width: 275px; height: 40px; border-radius: 20px; background: #3c3c50; border: 1px solid #4a4a5c; display: flex; align-items: center; padding-left: 14px; font-size: 16.500px; color: #c9c9d2; letter-spacing: -.25px; }
.tsearch span { margin: 0 auto 0 11px; }
.tsearch > svg:last-child { margin-right: 7px; }
.apps { display: flex; margin-left: 2px; height: 58px; }
.apps > div { width: 55px; display: flex; align-items: center; justify-content: center; }
.apps .up { margin: -8px 0 0 5px; }
.badge { font: 15px "Open Sans", sans-serif; fill: #27182b; }
.teams { font: bold 13px "Open Sans", sans-serif; fill: #fff; }
.open { position: relative; }
.open::after { content: ""; position: absolute; bottom: 5px; width: 8px; height: 4px; border-radius: 2px; background: #9696a2; }
.apps .active { width: 50px; height: 50px; margin: 4px 0 0 3px; background: #2d2d42; border: 1px solid #38384c; border-radius: 5px; position: relative; }
.active::after { content: ""; position: absolute; bottom: 1px; width: 20px; height: 4px; border-radius: 2px; background: #4cc2ff; }
.apps .ch { margin: -6px 0 0 4px; }
.kk { font: 13px "Open Sans", sans-serif; fill: #e0d7d3; }
.tray { margin-left: auto; display: flex; align-items: center; gap: 10px; padding-right: 22px; }
.tray > svg:first-child { margin-right: 13px; }
.tray > svg:nth-child(2) { margin-right: 9px; }
.clock { display: flex; flex-direction: column; align-items: flex-end; font-size: 14.500px; line-height: 20px; letter-spacing: .15px; width: 85px; margin-right: 1px; }
.clock span:first-child { letter-spacing: -.3px; }
.tray > svg:last-child { margin-left: 12px; }
.pre { font: bold 8px "Open Sans", sans-serif; fill: #222; }
```
